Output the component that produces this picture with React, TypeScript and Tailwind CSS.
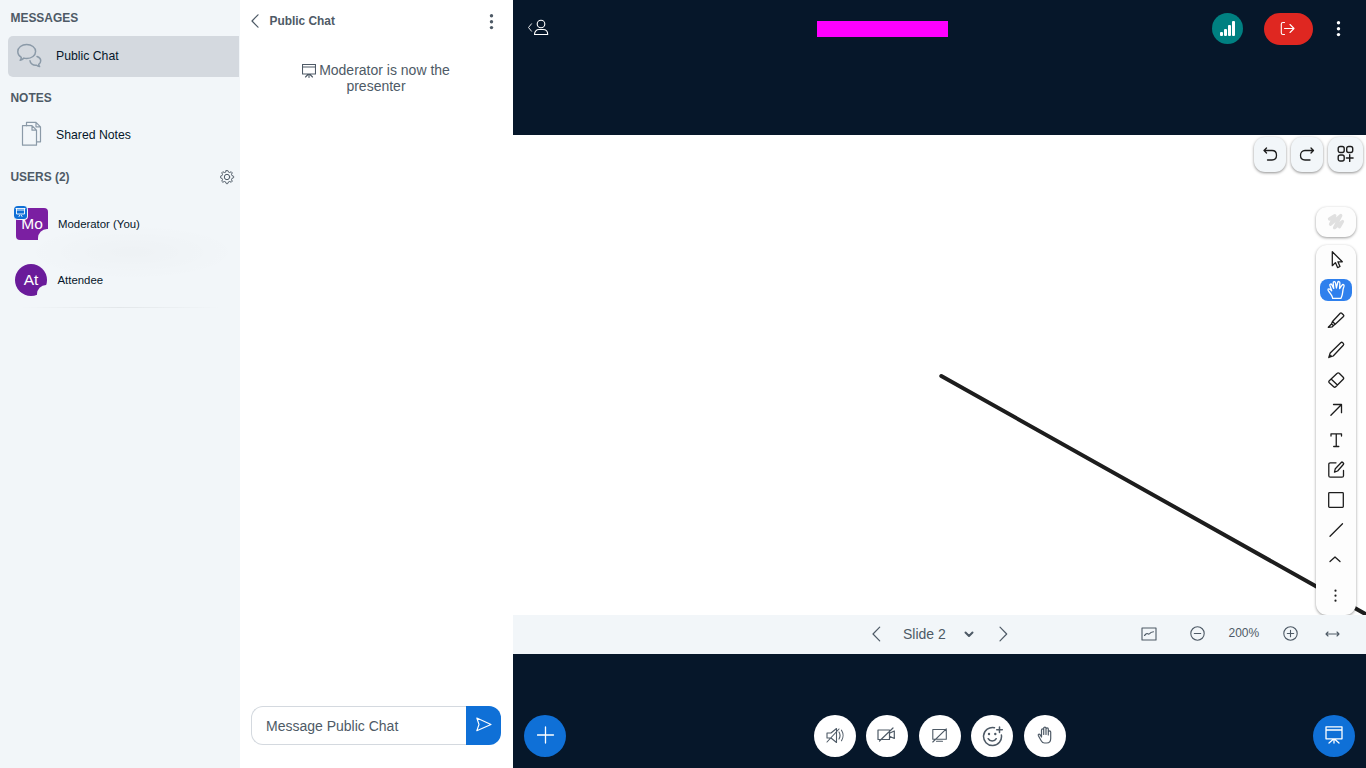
import type { ReactNode } from 'react';

type IconProps = {
  w: number;
  h: number;
  sw?: number;
  className?: string;
  children: ReactNode;
};

function Icon({ w, h, sw = 1.1, className = '', children }: IconProps) {
  return (
    <svg
      width={w}
      height={h}
      viewBox={`0 0 ${w} ${h}`}
      fill="none"
      stroke="currentColor"
      strokeWidth={sw}
      strokeLinecap="round"
      strokeLinejoin="round"
      className={`block shrink-0 ${className}`}
      aria-hidden="true"
    >
      {children}
    </svg>
  );
}

function Dots({ r = 1.7, gap = 5.9, className = '' }: { r?: number; gap?: number; className?: string }) {
  return (
    <Icon w={6} h={20} className={className}>
      {[-1, 0, 1].map((i) => (
        <circle key={i} cx={2.5} cy={9.7 + i * gap} r={r} fill="currentColor" stroke="none" />
      ))}
    </Icon>
  );
}

function Gear() {
  const points: string[] = [];
  for (let i = 0; i < 32; i++) {
    const radius = i % 4 < 2 ? 6.7 : 5.1;
    const angle = ((i - 0.5) * Math.PI) / 16 - Math.PI / 2;
    points.push(`${(7 + radius * Math.cos(angle)).toFixed(2)},${(7 + radius * Math.sin(angle)).toFixed(2)}`);
  }
  return (
    <Icon w={15} h={15} sw={1}>
      <polygon points={points.join(' ')} />
      <circle cx={7} cy={7} r={2.7} />
    </Icon>
  );
}

function Board({ className = '' }: { className?: string }) {
  return (
    <Icon w={14} h={14} className={className}>
      <path d="M.5 .5h13v9.500H.5zM.5 3h13M7 10v3.500M6 10.500 3.500 13M8 10.500l2.500 2.500" />
    </Icon>
  );
}

function Sidebar() {
  return (
    <aside className="flex w-60 shrink-0 flex-col bg-[#f2f6f9] text-[12.250px] text-[#06172a]">
      <h2 className="mt-2 ml-[10.500px] h-5 text-[11.950px] leading-5 font-bold text-[#4e5a66]">MESSAGES</h2>
      <div className="mt-2 mr-px ml-2 flex h-[41px] items-center rounded-l-[5px] bg-[#d4d9df]">
        <Icon w={26} h={25} sw={1.5} className="-mt-[2px] ml-2 text-[#8b9aa8]">
          <path d="M5.300 14.300C3.200 13 1.800 11 1.800 8.500c0-4 4-7 8.900-7s8.900 3 8.900 7-4 7-8.900 7c-1 0-2-.1-2.800-.4-1 1-2.300 1.900-3.700 2.200.8-1 1.200-2 1.100-3z" />
          <path d="M21 13.500c2 .7 3.700 2.200 3.700 4.300 0 1.500-.8 2.800-2 3.600 0 .8.300 1.500.9 2.200-1.300-.2-2.300-.7-3-1.400-3.600.5-6.400-1.600-6.600-4.400" />
        </Icon>
        <span className="-mt-px ml-[14px]">Public Chat</span>
      </div>
      <h2 className="mt-[11px] ml-[10.500px] h-5 text-[11.950px] leading-5 font-bold text-[#4e5a66]">NOTES</h2>
      <div className="mt-[7px] ml-2 flex h-10 items-center">
        <Icon w={22} h={26} sw={1.2} className="-mt-[2px] ml-[13px] text-[#8b9aa8]">
          <path d="M1.500 4.700h9.500l4.500 4.500v15h-14zM11 4.700v4.500h4.500" />
          <path d="M5.500 4.700V1.300h9.500l4.500 4.500v15h-4M15 1.300v4.500h4.500" />
        </Icon>
        <span className="ml-[13px]">Shared Notes</span>
      </div>
      <div className="mt-3 flex h-5 items-center justify-between pr-[5px] pl-[10.500px] text-[#4e5a66]">
        <h2 className="text-[11.950px] leading-5 font-bold">USERS (2)</h2>
        <Gear />
      </div>
      <div className="flex flex-col">
        <div className="mt-[9px] flex h-14 items-center pl-4">
          <div className="relative h-8 w-8 rounded-[4px] bg-[#7b1fa2] text-center text-[15.500px] leading-8 text-white">
            Mo
            <span className="absolute right-0 bottom-0 h-[11px] w-[10px] rounded-tl-[9px] bg-[#f2f6f9]" />
            <span className="absolute -top-[2px] -left-[2px] flex h-[14px] w-[14px] items-center justify-center rounded-[4px] border-r border-b border-[#f2f6f9] bg-[#0f70d7]">
              <Icon w={11} h={11} sw={0.9}>
                <path d="M1 1.500h9M1.500 1.500v5.500h8v-5.500M1.500 3h8M4 9.500l.7-1.200M7 9.500l-.7-1.200" />
              </Icon>
            </span>
          </div>
          <span className="mt-px ml-[10px] pt-px text-[11.400px]">Moderator (You)</span>
        </div>
        <div className="-mt-7 h-14 bg-radial-[closest-side_at_55%_50%] from-black/[0.018] to-transparent" />
        <div className="-mt-7 flex h-14 items-center pl-[15px]">
          <div className="relative h-8 w-8 rounded-full bg-[#6a1b9a] text-center text-[15.500px] leading-8 text-white">
            At
            <span className="absolute right-0 bottom-0 h-[11px] w-[10px] rounded-tl-[9px] bg-[#f2f6f9]" />
          </div>
          <span className="mt-px ml-[10.500px] pt-px text-[11.400px]">Attendee</span>
        </div>
        <div className="mx-5 -mt-px h-px bg-linear-to-r from-transparent via-[#e3e7ea] to-transparent" />
      </div>
    </aside>
  );
}

function ChatPanel() {
  return (
    <section className="flex w-[273px] shrink-0 flex-col bg-white text-[#4e5a66]">
      <header className="flex h-[42px] items-center pl-[11px]">
        <Icon w={8} h={14} sw={1.2}>
          <path d="M7 .8 1 7l6 6.200" />
        </Icon>
        <h1 className="ml-[10.500px] flex-1 text-[11.900px] leading-5 font-bold">Public Chat</h1>
        <Dots className="mt-px mr-[18.500px]" />
      </header>
      <div className="flex-1 pt-5 text-center text-[14px] leading-4">
        <p className="mx-auto w-[160px] pr-px">
          <span className="inline-block pr-[3px] align-[-2.500px]">
            <Board />
          </span>
          Moderator is now the presenter
        </p>
      </div>
      <div className="mb-[23px] ml-[11px] flex h-[39px] w-[250px]">
        <div className="flex flex-1 items-center rounded-l-xl border border-r-0 border-[#d4d9df] pt-px pl-[14px] text-[14px]">
          Message Public Chat
        </div>
        <button className="flex w-[35px] items-center justify-center rounded-r-xl bg-[#0f70d7] text-white">
          <Icon w={16} h={15} className="-mt-[3px]">
            <path d="M.8 1 15 7.500.8 13.700 3 7.500z" />
          </Icon>
        </button>
      </div>
    </section>
  );
}

function TopBar() {
  return (
    <header className="flex h-[135px] items-start text-white">
      <Icon w={22} h={18} className="mt-[19px] ml-[14px]">
        <path d="M4.500 4.800 1.500 8.500l3 3.700" strokeWidth={0.9} />
        <circle cx={14} cy={5} r={3.800} />
        <path d="M7.500 15.500c0-3.200 2-5 4.500-5h4c2.500 0 4.700 1.800 4.700 5z" />
      </Icon>
      <div className="mt-[21px] ml-[268px] h-4 w-[131px] bg-[#ff00ff]" />
      <div className="mt-[13px] ml-auto flex h-8 items-start">
        <div className="flex h-[31px] w-[31px] items-end justify-center gap-px rounded-full bg-[#008081] pb-2">
          <span className="h-1 w-[3px] rounded-[1px] bg-white" />
          <span className="h-[7px] w-[3px] rounded-[1px] bg-white" />
          <span className="h-[11px] w-[3px] rounded-[1px] bg-white" />
          <span className="h-[15px] w-[3px] rounded-[1px] bg-white" />
        </div>
        <button className="ml-[21px] flex h-8 w-[49px] items-center justify-center rounded-full bg-[#df2721]">
          <Icon w={15} h={15} className="-mt-px -ml-[3px]">
            <path d="M4.500 1.500H3C1.900 1.500 1.300 2 1.300 3v9c0 1 .6 1.500 1.700 1.500h1.500M4.500 7.500h9.500M10 3.500l4 4-4 4" />
          </Icon>
        </button>
        <Dots className="mt-[6px] mr-[24.500px] ml-[22.500px]" />
      </div>
    </header>
  );
}

const tools: { name: string; icon: ReactNode }[] = [
  {
    name: 'Select',
    icon: <path d="M6.300 1.700v14l3.100-3.100 2.200 5 2.400-1.100-2.100-4.700h4.400z" />,
  },
  {
    name: 'Hand',
    icon: (
      <path d="M5.700 18.300c-.3-2.300-1.700-3.500-2.700-5.200C2.200 11.700.4 10.200 1 9.300c.8-.9 2.300 0 3.700 1.500L2.900 5.600C2.400 4 4.300 3.400 4.900 4.900l1.800 3.600L6.200 3c-.1-1.600 2-1.800 2.300-.2l.9 5.200L10.700 2.500c.4-1.500 2.300-1.200 2.200.4l-.3 5.600 2.400-3.300c.9-1.300 2.500-.5 2 1-1.100 2.600-1.300 4-1.400 6.400-.1 2-.8 3.700-1.600 5.700z" transform="translate(1 0)" />
    ),
  },
  {
    name: 'Highlight',
    icon: <path d="M5.800 11.500 13.500 3.200c.5-.5 1-.5 1.500 0l1.800 1.800c.5.500.5 1 0 1.500l-8.300 7.700zM5.800 11.500l-1 2.500-3.200 3.300 4-.5 1.200-1.300 1.700-1.300M4.800 14l2 1.500" transform="translate(.7 0)" />,
  },
  {
    name: 'Draw',
    icon: <path d="m2.300 17.700 1.400-4.500L14.200 2.900c.7-.6 1.300-.6 1.900 0l.7.700c.6.6.6 1.200 0 1.900L6.700 16.200zM2.300 17.700l2.200-2" transform="translate(.5 -.2)" />,
  },
  {
    name: 'Eraser',
    icon: <path d="M2.900 10.800 10.800 3.300c.7-.7 1.300-.7 2 0l4 4c.7.700.7 1.300 0 2l-7.500 7.500c-.7.700-1.300.7-2 0l-4.400-4c-.7-.7-.7-1.300 0-2zM5 9.300l6 5.700" transform="translate(.4 0)" />,
  },
  { name: 'Arrow', icon: <path d="M4.900 15.300 15.500 4.500M7.500 4.500h8v8.200" /> },
  { name: 'Text', icon: <path d="M5 6V3.800h10.500V6M10.250 3.800v12.700M7.700 16.500h5.100" /> },
  {
    name: 'Note',
    icon: <path d="M10 2.800H4.300c-1 0-1.500.5-1.500 1.500v11.400c0 1 .5 1.500 1.500 1.500h11.700c1 0 1.500-.5 1.500-1.500V10.500M8.500 12.200l.8-3.500 6.200-6.500c.8-.8 2.800 1.200 2 2L11.600 11z" />,
  },
  { name: 'Rectangle', icon: <rect x={2.700} y={2.700} width={14.600} height={14.600} rx={0.8} /> },
  { name: 'Line', icon: <path d="M4 16.200 16.500 3.800" /> },
];

const floatingButton =
  'flex h-[35px] items-center justify-center rounded-[11px] bg-[#f2f6f9] shadow-[0_1px_3px_rgba(0,0,0,0.45)]';

function Whiteboard() {
  return (
    <div className="relative h-[480px] overflow-hidden bg-white text-[#1d1d1d]">
      <svg width={853} height={480} className="block">
        <line x1={428.300} y1={241} x2={855} y2={480.500} stroke="#1d1d1d" strokeWidth={4} strokeLinecap="round" />
      </svg>
      <div className="absolute top-[2px] right-[3px] flex gap-[5px]">
        <button className={`${floatingButton} w-8`}>
          <Icon w={16} h={16} sw={1.300}>
            <path d="M4.500 1 2 3.500 4.500 6M2 3.500H10c2.800 0 4.500 2 4.500 4.800S12.800 13 10 13H5.500" />
          </Icon>
        </button>
        <button className={`${floatingButton} w-8`}>
          <Icon w={16} h={16} sw={1.300} className="-ml-px">
            <path d="M12 1 14.500 3.500 12 6M14.500 3.500H6C3.200 3.500 1.500 5.500 1.500 8.300S3.200 13 6 13h5" />
          </Icon>
        </button>
        <button className={`${floatingButton} w-[35px]`}>
          <Icon w={18} h={18} sw={1.400} className="-mt-px">
            <rect x={1.200} y={1.500} width={6} height={6} rx={2} />
            <rect x={9.700} y={1.500} width={6} height={6} rx={2} />
            <rect x={1.200} y={10} width={6} height={6} rx={2} />
            <path d="M12.700 9.700v6.700M9.400 13h6.700" />
          </Icon>
        </button>
      </div>
      <div className="absolute top-[72px] right-[10px] flex w-10 flex-col gap-2">
        <div className="flex h-[30px] items-center justify-center rounded-[11px] bg-[#fdfdfd] text-[#e0e0e0] shadow-[0_1px_3px_rgba(0,0,0,0.4)]">
          <Icon w={18} h={18} sw={3.300}>
            <path d="M2.500 6 7.800 2.700 3.500 11.300 13.800 2.500 7.500 14.700 15.500 8.500 12.500 13.700" />
          </Icon>
        </div>
        <div className="flex h-[370px] flex-col items-center rounded-[11px] bg-[#fdfdfd] shadow-[0_1px_3px_rgba(0,0,0,0.4)]">
          {tools.map((tool) => (
            <button
              key={tool.name}
              aria-label={tool.name}
              className={
                tool.name === 'Hand'
                  ? 'my-1 flex h-[22px] w-8 items-center justify-center rounded-[8px] bg-[#2f80ed] text-white'
                  : 'flex h-[30px] w-8 items-center justify-center'
              }
            >
              <Icon w={20} h={20} sw={1.300}>
                {tool.icon}
              </Icon>
            </button>
          ))}
          <Icon w={12} h={8} sw={1.300} className="mt-[10px] mr-[2px]">
            <path d="M1 6.500 6 2l5 4.500" />
          </Icon>
          <Dots r={1.100} gap={5} className="mt-[23px] mr-px" />
        </div>
      </div>
    </div>
  );
}

function SlideBar() {
  return (
    <div className="flex h-[39px] items-center bg-[#f2f6f9] pb-px text-[#4e5a66]">
      <Icon w={9} h={16} sw={1.2} className="ml-[358.500px]">
        <path d="M7.700 1.200 1 8l6.700 6.800" />
      </Icon>
      <span className="-mt-px ml-[22.500px] w-[61px] text-[14px] leading-5">Slide 2</span>
      <Icon w={10} h={7} sw={2} className="mt-px">
        <path d="M1.500 1.500 5 5l3.500-3.500" />
      </Icon>
      <Icon w={9} h={16} sw={1.2} className="ml-[24.500px]">
        <path d="M1 1.200 7.700 8 1 14.800" />
      </Icon>
      <Icon w={16} h={14} className="-mt-px ml-[133px]">
        <path d="M1 1h14v12H1zM3.500 8.500 5 7c.7-.7 1-.7 1.800-.2.700.5 1.200.4 1.800-.2C9.500 5.500 10.500 5 12.500 4.800" />
      </Icon>
      <Icon w={15} h={15} className="-mt-px ml-[33px]">
        <circle cx={7.500} cy={7.500} r={6.700} />
        <path d="M4.300 7.500h6.400" />
      </Icon>
      <span className="-mt-[2px] ml-6 w-[54px] text-[12px] leading-4">200%</span>
      <Icon w={15} h={15} className="-mt-px">
        <circle cx={7.500} cy={7.500} r={6.700} />
        <path d="M4.300 7.500h6.400M7.500 4.300v6.400" />
      </Icon>
      <Icon w={15} h={8} className="-mt-px ml-[27px]">
        <path d="M1 4h13M3 2 1 4l2 2M12 2l2 2-2 2" />
      </Icon>
    </div>
  );
}

function RoundButton({ children, className }: { children: ReactNode; className: string }) {
  return <button className={`flex h-[42px] w-[42px] items-center justify-center rounded-full ${className}`}>{children}</button>;
}

function ActionsBar() {
  return (
    <footer className="flex h-[114px] items-end pr-[11px] pb-[11px] pl-[11px] text-white">
      <RoundButton className="bg-[#0f70d7]">
        <Icon w={18} h={18} sw={1.300} className="-mt-[3px] ml-px">
          <path d="M8.500 1v16M.5 9h16" />
        </Icon>
      </RoundButton>
      <div className="ml-[248px] flex gap-[10.400px] text-[#4e5a66]">
        <RoundButton className="bg-white">
          <Icon w={18} h={17} className="-mt-[2px]">
            <path d="M1 6h4l5.500-4.500V15.500L5 11H1zM1 15 13 2M13 5c1.200 2 1.200 5 0 7M15.500 3.200c2 3 2 7.500 0 10.500" />
          </Icon>
        </RoundButton>
        <RoundButton className="bg-white">
          <Icon w={18} h={15} sw={1.200} className="-mt-[3px] -ml-[2px]">
            <path d="M1 3h11.500v9.500H1zM12.500 6.300 17.300 4v7.500l-4.800-2.300M2.500 14 16 1" />
          </Icon>
        </RoundButton>
        <RoundButton className="bg-white">
          <Icon w={15} h={15} className="-mt-[2px]">
            <path d="M.8 1.500h13.500v9.700H.8zM4.500 13.300h6M.8 14 14.300.8" />
          </Icon>
        </RoundButton>
        <RoundButton className="bg-white">
          <Icon w={21} h={21} sw={1.500}>
            <path d="M12.500 1.700A9 9 0 1 0 19.400 9M6.200 12.700c1.600 3.200 6.400 3.200 8 0M17.500 1v5.500M14.700 3.700h5.600" />
            <circle cx={7} cy={8} r={1.200} fill="currentColor" stroke="none" />
            <circle cx={13.300} cy={8} r={1.200} fill="currentColor" stroke="none" />
          </Icon>
        </RoundButton>
        <RoundButton className="bg-white">
          <Icon w={16} h={18} sw={1.200} className="-mt-[3px]">
            <path d="M4.500 11V4c0-1.500 2.200-1.500 2.200 0v4.500V2.200c0-1.500 2.300-1.500 2.300 0v6.300V3c0-1.400 2.300-1.400 2.300 0v6V6c0-1.400 2.400-1.400 2.400 0v6.500c0 3-1.500 4.500-4 4.500H7.500c-1.500 0-2.500-.8-3.300-2.200L1.400 9.700c-.6-1.300.8-2 1.600-1z" />
          </Icon>
        </RoundButton>
      </div>
      <RoundButton className="mr-0 ml-auto bg-[#0f70d7]">
        <Icon w={18} h={18} sw={1.300} className="-mt-[3px] -ml-px">
          <path d="M1 .8h16v12H1zM1 4h16M9 13v4M8 13.500 4 17M10 13.500l4 3.500" />
        </Icon>
      </RoundButton>
    </footer>
  );
}

export default function App() {
  return (
    <div className="flex h-[768px] w-[1366px] overflow-hidden font-['Liberation_Sans',Arial,sans-serif]">
      <Sidebar />
      <ChatPanel />
      <main className="flex min-w-0 flex-1 flex-col bg-[#06172a]">
        <TopBar />
        <Whiteboard />
        <SlideBar />
        <ActionsBar />
      </main>
    </div>
  );
}
